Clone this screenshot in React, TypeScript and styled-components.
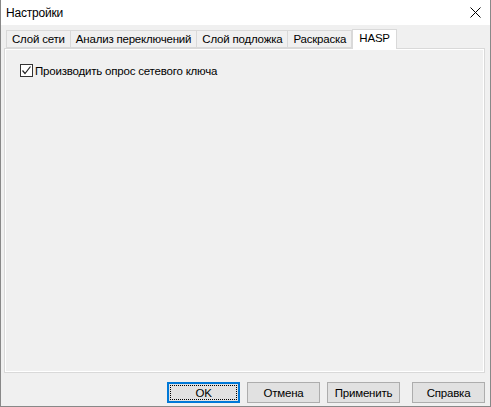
import React from "react";
import styled, { createGlobalStyle } from "styled-components";

const Global = createGlobalStyle`
  html, body { margin: 0; padding: 0; background: #f0f0f0; }
  body { font-family: "Liberation Sans", Arial, sans-serif; font-size: 11.5px; letter-spacing: -0.2px; color: #000; }
  * { box-sizing: border-box; }
`;

const Window = styled.div`
  width: 491px;
  height: 407px;
  display: flex;
  flex-direction: column;
  border: 1px solid #888888;
  border-top: none;
  background: #f0f0f0;
`;

const TitleBar = styled.div`
  height: 25px;
  background: #ffffff;
  display: flex;
  align-items: center;
  justify-content: space-between;
  padding: 0 9px 0 5px;
`;

const Title = styled.span`
  font-size: 12px;
  line-height: 16px;
  margin-top: 1px;
`;

const Body = styled.div`
  flex: 1;
  display: flex;
  flex-direction: column;
  padding: 4px 4px 3px 3px;
`;

const TabStrip = styled.div`
  display: flex;
  align-items: flex-end;
  height: 19px;
  padding-left: 2px;
  position: relative;
  z-index: 1;
`;

const Tab = styled.div<{ $active?: boolean }>`
  height: ${(p) => (p.$active ? "20px" : "18px")};
  margin-bottom: ${(p) => (p.$active ? "-1px" : "0")};
  padding: 0 ${(p) => (p.$active ? "6px" : "5px")};
  display: flex;
  align-items: ${(p) => (p.$active ? "flex-start" : "center")};
  padding-top: ${(p) => (p.$active ? "2px" : "0")};
  border: 1px solid #d9d9d9;
  border-bottom: ${(p) => (p.$active ? "none" : "1px solid #d9d9d9")};
  border-left: ${(p) => (p.$active ? "1px solid #d9d9d9" : "none")};
  background: ${(p) => (p.$active ? "#ffffff" : "#f0f0f0")};
  white-space: nowrap;
  &:first-child { border-left: 1px solid #d9d9d9; }
`;

const Panel = styled.div`
  height: 325px;
  width: 481px;
  border: 1px solid #d9d9d9;
  box-shadow: inset 0 0 0 1px #ffffff;
  background: #f0f0f0;
  padding: 15px 15px;
`;

const CheckRow = styled.label`
  display: flex;
  align-items: center;
  gap: 2px;
  height: 13px;
`;

const Box = styled.span`
  width: 13px;
  height: 13px;
  border: 1px solid #333333;
  background: #ffffff;
  display: flex;
  align-items: center;
  justify-content: center;
`;

const ButtonRow = styled.div`
  display: flex;
  justify-content: flex-end;
  margin-top: 9px;
  padding-right: 1px;
  gap: 7px;
`;

const Button = styled.button<{ $default?: boolean; $extra?: number }>`
  width: 73px;
  height: 21px;
  font-family: inherit;
  font-size: 11.5px;
  letter-spacing: -0.2px;
  color: #000;
  background: #e1e1e1;
  border: ${(p) => (p.$default ? "2px solid #0078d7" : "1px solid #adadad")};
  margin-left: ${(p) => (p.$extra ? `${p.$extra}px` : "0")};
  padding: 0;
  position: relative;
  display: flex;
  align-items: center;
  justify-content: center;
  &::after {
    content: "";
    display: ${(p) => (p.$default ? "block" : "none")};
    position: absolute;
    inset: 1px;
    border: 1px dotted #000;
  }
`;

export default function App() {
  return (
    <>
      <Global />
      <Window>
        <TitleBar>
          <Title>Настройки</Title>
          <svg width="11" height="11" viewBox="0 0 11 11">
            <path d="M0.5 0.5 L10.5 10.5 M10.5 0.5 L0.5 10.5" stroke="#000" strokeWidth="1" />
          </svg>
        </TitleBar>
        <Body>
          <TabStrip>
            <Tab>Слой сети</Tab>
            <Tab>Анализ переключений</Tab>
            <Tab>Слой подложка</Tab>
            <Tab>Раскраска</Tab>
            <Tab $active>HASP</Tab>
          </TabStrip>
          <Panel>
            <CheckRow>
              <Box>
                <svg width="11" height="11" viewBox="0 0 11 11">
                  <path d="M1.5 5.5 L4 8.5 L9.5 1.5" stroke="#222" strokeWidth="1.2" fill="none" />
                </svg>
              </Box>
              <span>Производить опрос сетевого ключа</span>
            </CheckRow>
          </Panel>
          <ButtonRow>
            <Button $default>OK</Button>
            <Button>Отмена</Button>
            <Button>Применить</Button>
            <Button $extra={5}>Справка</Button>
          </ButtonRow>
        </Body>
      </Window>
    </>
  );
}
